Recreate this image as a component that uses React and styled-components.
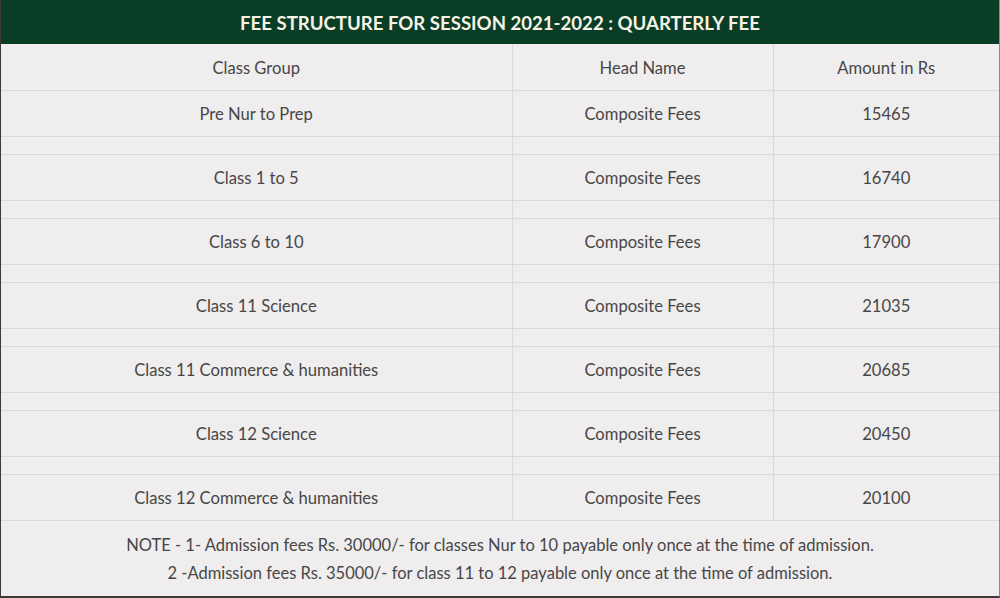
import React from "react";
import styled, { createGlobalStyle } from "styled-components";

const Global = createGlobalStyle`
  html, body { margin: 0; padding: 0; background: #efeded; }
  body { font-family: Lato, "Open Sans", sans-serif; }
`;

const Frame = styled.div`
  width: 1000px;
  height: 598px;
  box-sizing: border-box;
  border-left: 1px solid #3a3a3a;
  border-bottom: 2px solid #3a3a3a;
  border-right: 1px solid #8a8a8a;
  background: #efeded;
  display: flex;
  flex-direction: column;
  overflow: hidden;
`;

const Title = styled.div`
  height: 44px;
  box-sizing: border-box;
  padding-top: 1px;
  background: #0a3d26;
  color: #f6f3e6;
  font-weight: 700;
  font-size: 18.6px;
  display: flex;
  align-items: center;
  justify-content: center;
`;

const Table = styled.table`
  width: 100%;
  border-collapse: collapse;
  table-layout: fixed;
  color: #474747;
  font-size: 16.6px;
`;

const Row = styled.tr`
  height: ${(p) => (p.$spacer ? 18 : 46)}px;
  border-bottom: 1px solid #dad8d8;
`;

const Cell = styled.td`
  text-align: center;
  vertical-align: middle;
  padding: 2px 0 0;
  border-right: 1px solid #dad8d8;
  &:last-child { border-right: none; }
`;

const HeadCell = styled(Cell).attrs({ as: "th" })`
  font-weight: 400;
`;

const Note = styled.div`
  flex: 1;
  display: flex;
  flex-direction: column;
  align-items: center;
  justify-content: center;
  color: #474747;
  font-size: 16.5px;
  line-height: 28px;
  padding-top: 1px;
`;

const rows = [
  ["Pre Nur to Prep", "15465"],
  ["Class 1 to 5", "16740"],
  ["Class 6 to 10", "17900"],
  ["Class 11 Science", "21035"],
  ["Class 11 Commerce & humanities", "20685"],
  ["Class 12 Science", "20450"],
  ["Class 12 Commerce & humanities", "20100"],
];

export default function App() {
  return (
    <>
      <Global />
      <Frame>
        <Title>FEE STRUCTURE FOR SESSION 2021-2022 : QUARTERLY FEE</Title>
        <Table>
          <colgroup>
            <col style={{ width: 511 }} />
            <col style={{ width: 261 }} />
            <col />
          </colgroup>
          <thead>
            <Row>
              <HeadCell>Class Group</HeadCell>
              <HeadCell>Head Name</HeadCell>
              <HeadCell>Amount in Rs</HeadCell>
            </Row>
          </thead>
          <tbody>
            {rows.map(([g, a], i) => (
              <React.Fragment key={g}>
                {i > 0 && (
                  <Row $spacer>
                    <Cell />
                    <Cell />
                    <Cell />
                  </Row>
                )}
                <Row>
                  <Cell>{g}</Cell>
                  <Cell>Composite Fees</Cell>
                  <Cell>{a}</Cell>
                </Row>
              </React.Fragment>
            ))}
          </tbody>
        </Table>
        <Note>
          <div>NOTE - 1- Admission fees Rs. 30000/- for classes Nur to 10 payable only once at the time of admission.</div>
          <div>2 -Admission fees Rs. 35000/- for class 11 to 12 payable only once at the time of admission.</div>
        </Note>
      </Frame>
    </>
  );
}
